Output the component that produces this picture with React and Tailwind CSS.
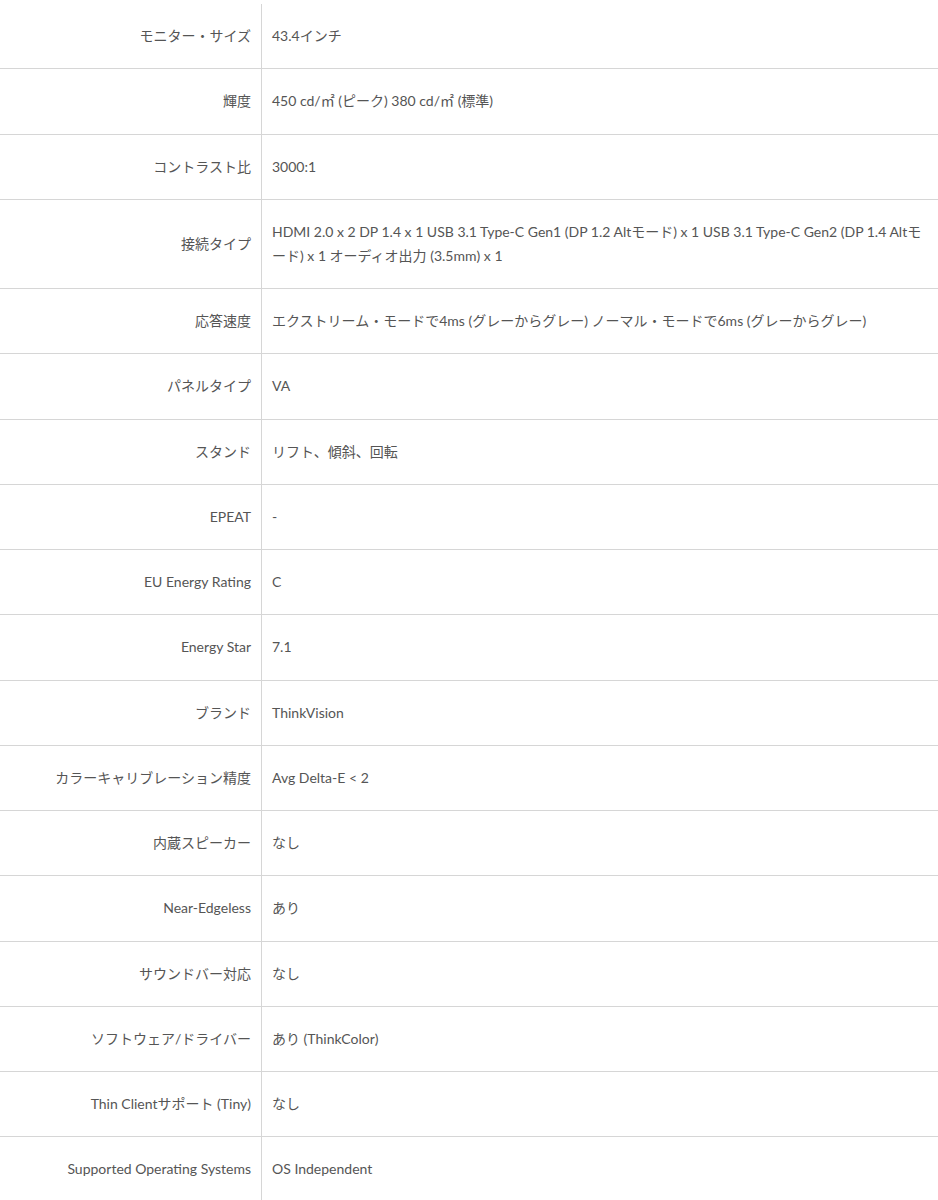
const specs = [
    ["モニター・サイズ", "43.4インチ"],
    ["輝度", "450 cd/㎡ (ピーク) 380 cd/㎡ (標準)"],
    ["コントラスト比", "3000:1"],
    [
        "接続タイプ",
        "HDMI 2.0 x 2 DP 1.4 x 1 USB 3.1 Type-C Gen1 (DP 1.2 Altモード) x 1 USB 3.1 Type-C Gen2 (DP 1.4 Altモード) x 1 オーディオ出力 (3.5mm) x 1",
    ],
    [
        "応答速度",
        "エクストリーム・モードで4ms (グレーからグレー) ノーマル・モードで6ms (グレーからグレー)",
    ],
    ["パネルタイプ", "VA"],
    ["スタンド", "リフト、傾斜、回転"],
    ["EPEAT", "-"],
    ["EU Energy Rating", "C"],
    ["Energy Star", "7.1"],
    ["ブランド", "ThinkVision"],
    ["カラーキャリブレーション精度", "Avg Delta-E < 2"],
    ["内蔵スピーカー", "なし"],
    ["Near-Edgeless", "あり"],
    ["サウンドバー対応", "なし"],
    ["ソフトウェア/ドライバー", "あり (ThinkColor)"],
    ["Thin Clientサポート (Tiny)", "なし"],
    ["Supported Operating Systems", "OS Independent"],
];

export default function App() {
    return (
        <div className="min-h-screen bg-white pt-1 font-['Lato','Noto_Sans_CJK_JP',sans-serif] text-[14px] leading-6 text-[#555]">
            {specs.map(([label, value], i) => (
                <div
                    key={label}
                    className={
                        i === specs.length - 1
                            ? "grid grid-cols-[262px_1fr]"
                            : "grid grid-cols-[262px_1fr] border-b border-[#d6d6d6]"
                    }
                >
                    <div className="flex items-center justify-end border-r border-[#d6d6d6] py-[20.125px] pr-[10px] text-right">
                        {label}
                    </div>
                    <div className="flex items-center py-[20.125px] pl-[10px] pr-[8px]">
                        {value}
                    </div>
                </div>
            ))}
        </div>
    );
}
